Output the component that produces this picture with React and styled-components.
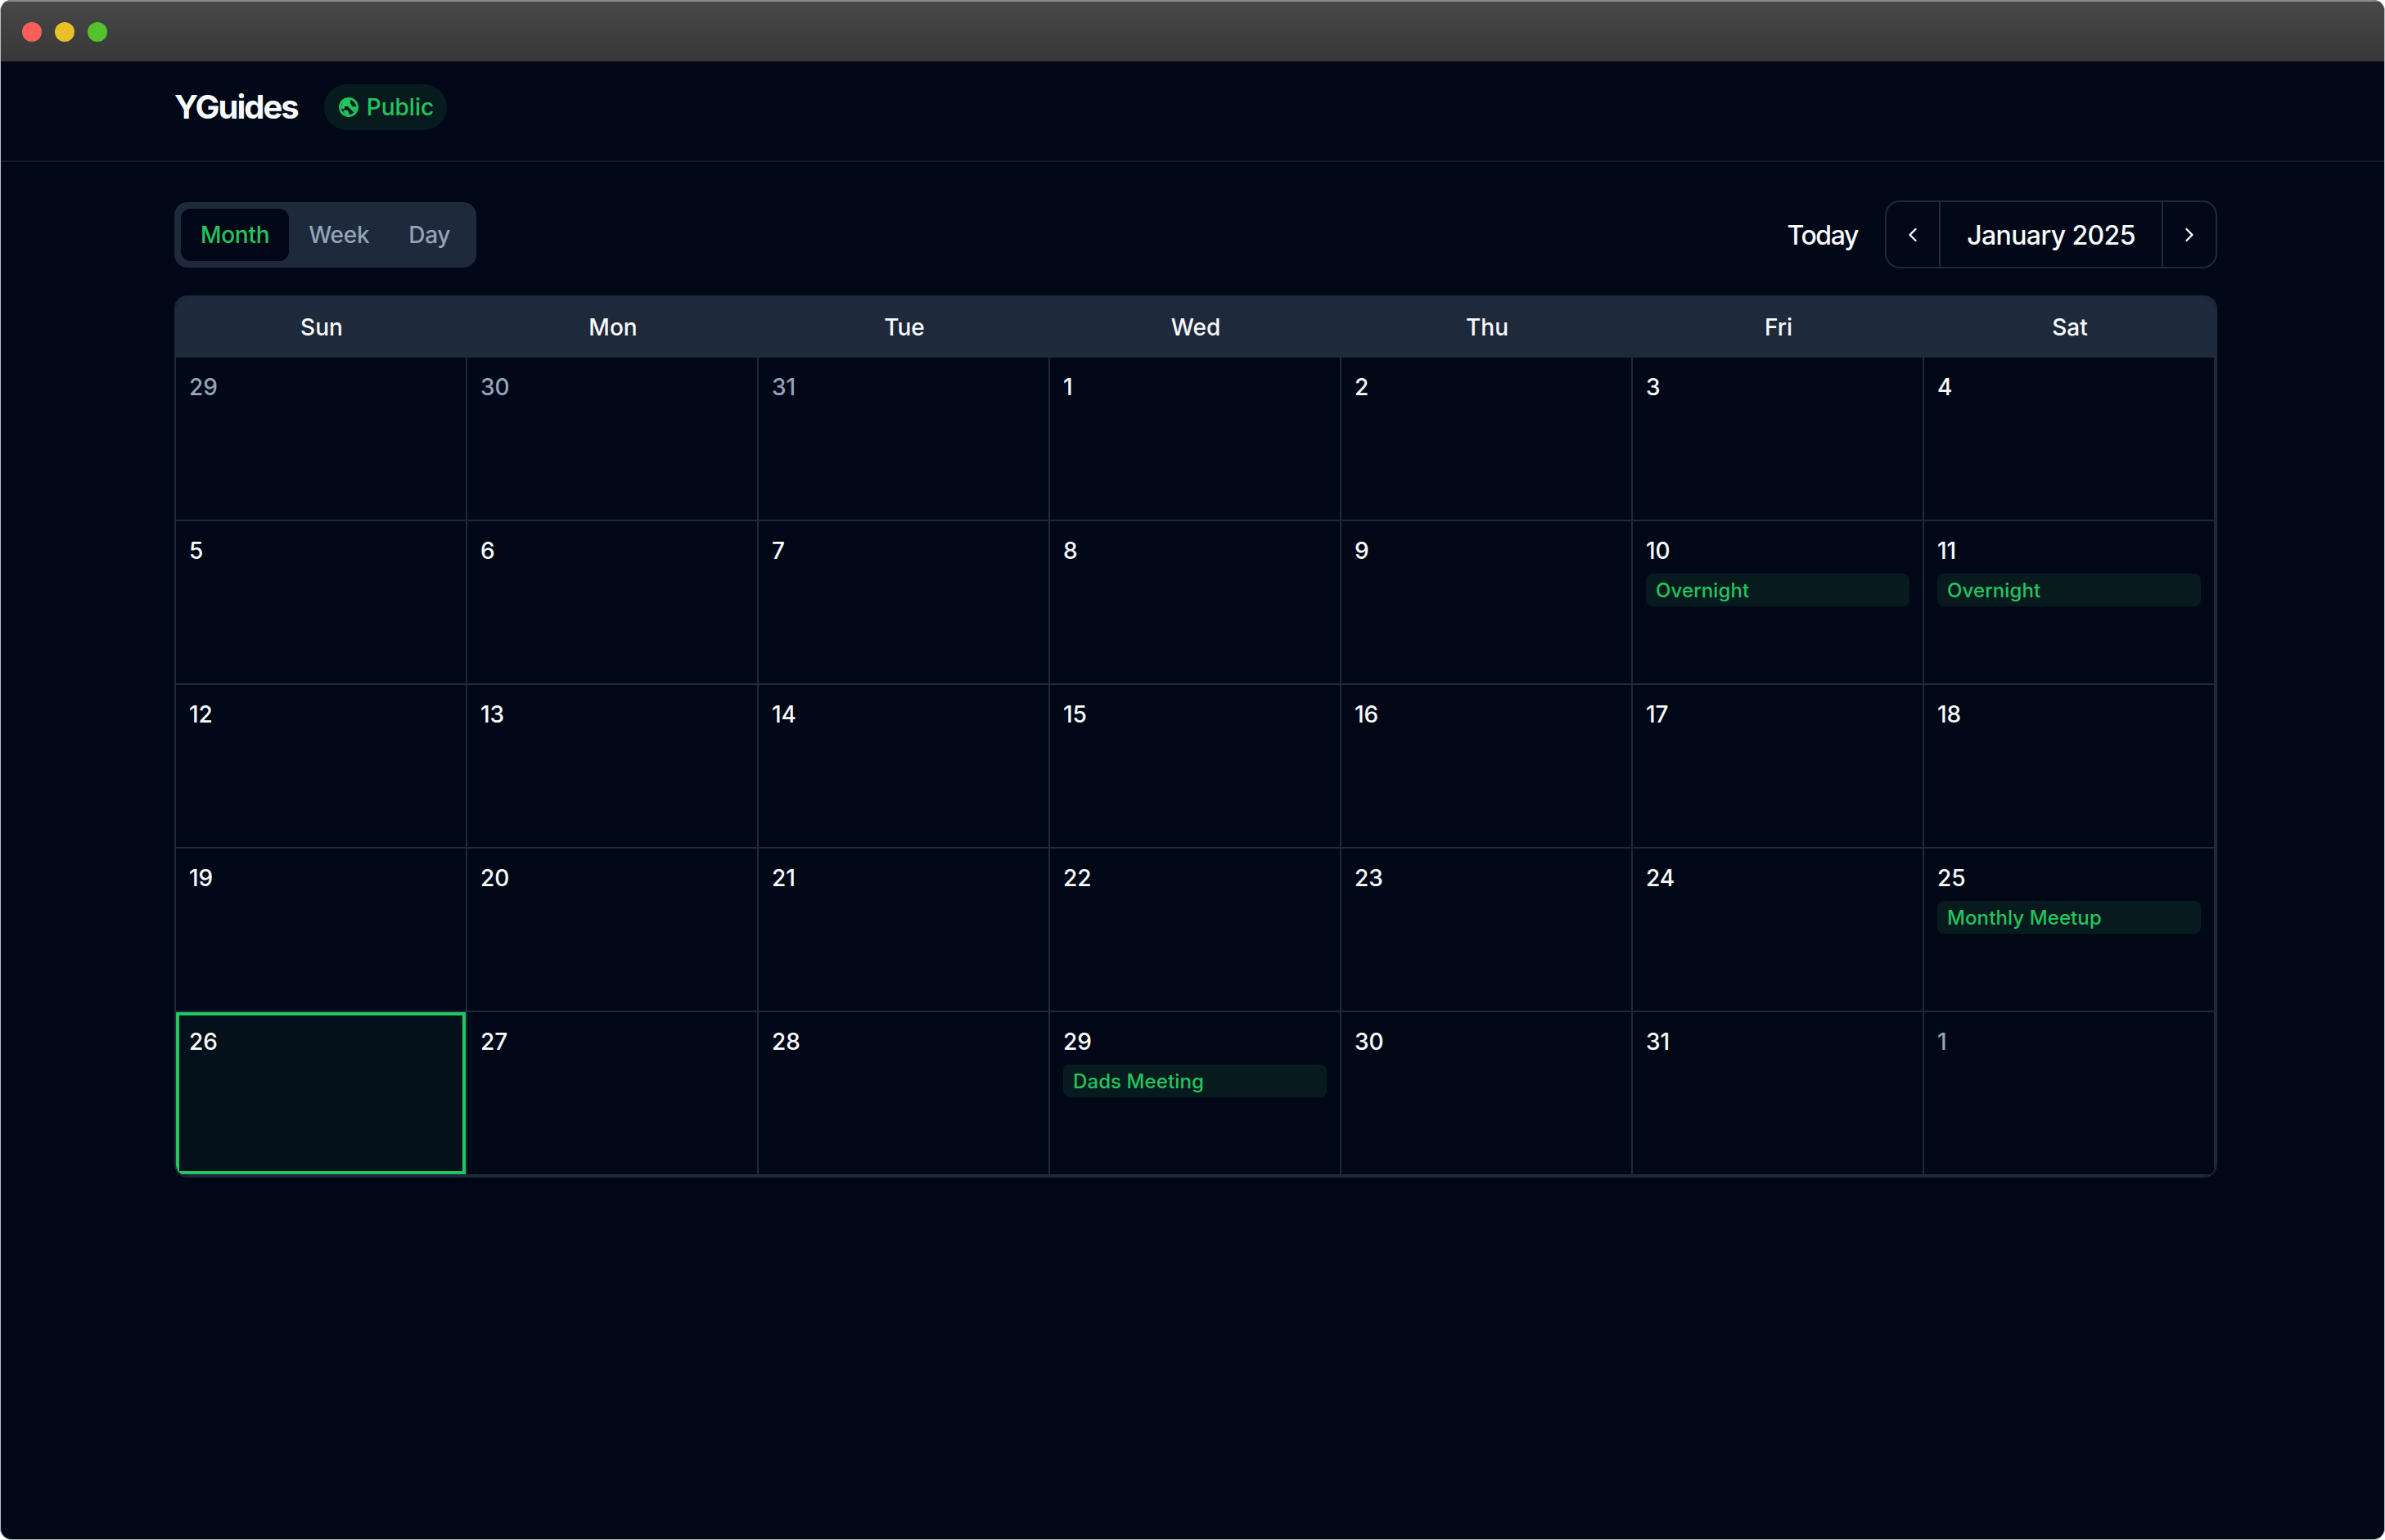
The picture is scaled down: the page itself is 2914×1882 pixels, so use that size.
import React from "react";
import styled, { createGlobalStyle } from "styled-components";
import { ChevronLeft, ChevronRight } from "lucide-react";

const Global = createGlobalStyle`
  html, body { margin: 0; padding: 0; background: #fff; }
  body { font-family: Inter, "Noto Sans", sans-serif; }
  * { box-sizing: border-box; }
`;

const Window = styled.div`
  width: 2914px;
  height: 1882px;
  background: #000817;
  border: 1px solid #b9bcc2;
  border-top: 0;
  border-radius: 14px;
  overflow: hidden;
  display: flex;
  flex-direction: column;
`;
const TitleBar = styled.div`
  height: 76px;
  flex: none;
  display: flex;
  align-items: center;
  gap: 16px;
  padding-left: 26px;
  background: linear-gradient(#484848, #373737);
  border-top: 2px solid #8a8a8a;
  border-bottom: 1px solid #0a0a0a;
`;
const Light = styled.span`
  width: 24px;
  height: 24px;
  border-radius: 50%;
  background: ${(p) => p.$color};
`;
const Header = styled.header`
  height: 122px;
  flex: none;
  display: flex;
  align-items: center;
  gap: 32px;
  padding: 0 211px 10px 212px;
  border-bottom: 2px solid #0f172a;
`;
const Logo = styled.div`
  font-size: 40px;
  font-weight: 700;
  line-height: 56px;
  letter-spacing: -2px;
  color: #f8fafc;
`;
const Badge = styled.div`
  height: 56px;
  display: flex;
  align-items: center;
  gap: 10px;
  padding: 0 16px 0 18px;
  border-radius: 28px;
  background: #071b1e;
  color: #22c55e;
  font-size: 28px;
  font-weight: 500;
`;
const GlobeIcon = styled.svg`
  width: 24px;
  height: 24px;
  flex: none;
`;
const Main = styled.main`
  padding: 47px 204px 0 212px;
  display: flex;
  flex-direction: column;
  gap: 33px;
`;
const Toolbar = styled.div`
  display: flex;
  justify-content: space-between;
  align-items: center;
`;
const Tabs = styled.div`
  display: flex;
  padding: 8px;
  border-radius: 16px;
  background: #1e293b;
`;
const Tab = styled.div`
  height: 64px;
  padding: 1px 24px 0;
  display: flex;
  align-items: center;
  border-radius: 12px;
  font-size: 28px;
  font-weight: 500;
  letter-spacing: -0.3px;
  color: ${(p) => (p.$active ? "#22c55e" : "#94a3b8")};
  background: ${(p) => (p.$active ? "#000817" : "transparent")};
`;
const Nav = styled.div`
  display: flex;
  align-items: center;
  gap: 33px;
`;
const Today = styled.div`
  padding-top: 2px;
  font-size: 32px;
  font-weight: 500;
  letter-spacing: -1.4px;
  color: #f8fafc;
`;
const Pager = styled.div`
  height: 83px;
  display: flex;
  border: 2px solid #1e293b;
  border-radius: 18px;
`;
const Arrow = styled.div`
  width: 64px;
  display: flex;
  align-items: center;
  justify-content: center;
  color: #f8fafc;
`;
const Month = styled.div`
  width: 274px;
  padding-top: 2px;
  display: flex;
  align-items: center;
  justify-content: center;
  font-size: 32px;
  font-weight: 500;
  letter-spacing: -0.6px;
  color: #f8fafc;
  border-left: 2px solid #1e293b;
  border-right: 2px solid #1e293b;
`;
const Calendar = styled.div`
  border: 2px solid #1e293b;
  border-radius: 16px;
  overflow: hidden;
`;
const Weekdays = styled.div`
  display: grid;
  grid-template-columns: repeat(7, 1fr);
  height: 74px;
  background: #1e293b;
`;
const Weekday = styled.div`
  display: flex;
  align-items: center;
  justify-content: center;
  font-size: 28px;
  font-weight: 500;
  color: #f8fafc;
`;
const Days = styled.div`
  display: grid;
  grid-template-columns: repeat(7, 1fr);
  grid-auto-rows: 200px;
`;
const Cell = styled.div`
  padding: 16px;
  border-right: 2px solid #1e293b;
  border-bottom: 2px solid #1e293b;
  background: ${(p) => (p.$today ? "#04111a" : "transparent")};
  box-shadow: ${(p) => (p.$today ? "inset 0 0 0 4px #22c55e" : "none")};
`;
const DayNumber = styled.div`
  font-size: 28px;
  line-height: 40px;
  font-weight: 500;
  color: ${(p) => (p.$muted ? "#94a3b8" : "#f8fafc")};
`;
const Event = styled.div`
  margin-top: 8px;
  height: 40px;
  padding: 0 12px;
  display: flex;
  align-items: center;
  border-radius: 8px;
  background: #071b1e;
  color: #22c55e;
  font-size: 24px;
  font-weight: 500;
  letter-spacing: 0.1px;
`;

const Globe = () => (
  <GlobeIcon viewBox="0 0 24 24" fill="none">
    <circle cx="12" cy="12" r="10.6" stroke="currentColor" strokeWidth="2.6" />
    <path
      fill="currentColor"
      d="M2.5 12L5 5l6-3 3.5.5L14 7l2 4 5.5.5.5 2.5-3.5 4.5-3-3-4.5-4.5H7.5L6.5 14.5 3 13.5z"
    />
    <path fill="currentColor" d="M7 15.5l4 .5 2.5 5.5-4.5-.5-4-3.5z" />
  </GlobeIcon>
);

const events = { 10: "Overnight", 11: "Overnight", 25: "Monthly Meetup", 29: "Dads Meeting" };
const lead = [29, 30, 31];
const cells = [
  ...lead.map((n) => ({ n, muted: true })),
  ...Array.from({ length: 31 }, (_, i) => ({ n: i + 1, event: events[i + 1], today: i + 1 === 26 })),
  { n: 1, muted: true },
];

export default function App() {
  return (
    <Window>
      <Global />
      <TitleBar>
        <Light $color="#ff5f57" />
        <Light $color="#e8c02a" />
        <Light $color="#54c22c" />
      </TitleBar>
      <Header>
        <Logo>YGuides</Logo>
        <Badge><Globe />Public</Badge>
      </Header>
      <Main>
        <Toolbar>
          <Tabs>
            <Tab $active>Month</Tab>
            <Tab>Week</Tab>
            <Tab>Day</Tab>
          </Tabs>
          <Nav>
            <Today>Today</Today>
            <Pager>
              <Arrow><ChevronLeft size={28} strokeWidth={2} /></Arrow>
              <Month>January 2025</Month>
              <Arrow><ChevronRight size={28} strokeWidth={2} /></Arrow>
            </Pager>
          </Nav>
        </Toolbar>
        <Calendar>
          <Weekdays>
            {["Sun", "Mon", "Tue", "Wed", "Thu", "Fri", "Sat"].map((d) => <Weekday key={d}>{d}</Weekday>)}
          </Weekdays>
          <Days>
            {cells.map((c, i) => (
              <Cell key={i} $today={c.today}>
                <DayNumber $muted={c.muted}>{c.n}</DayNumber>
                {c.event && <Event>{c.event}</Event>}
              </Cell>
            ))}
          </Days>
        </Calendar>
      </Main>
    </Window>
  );
}
